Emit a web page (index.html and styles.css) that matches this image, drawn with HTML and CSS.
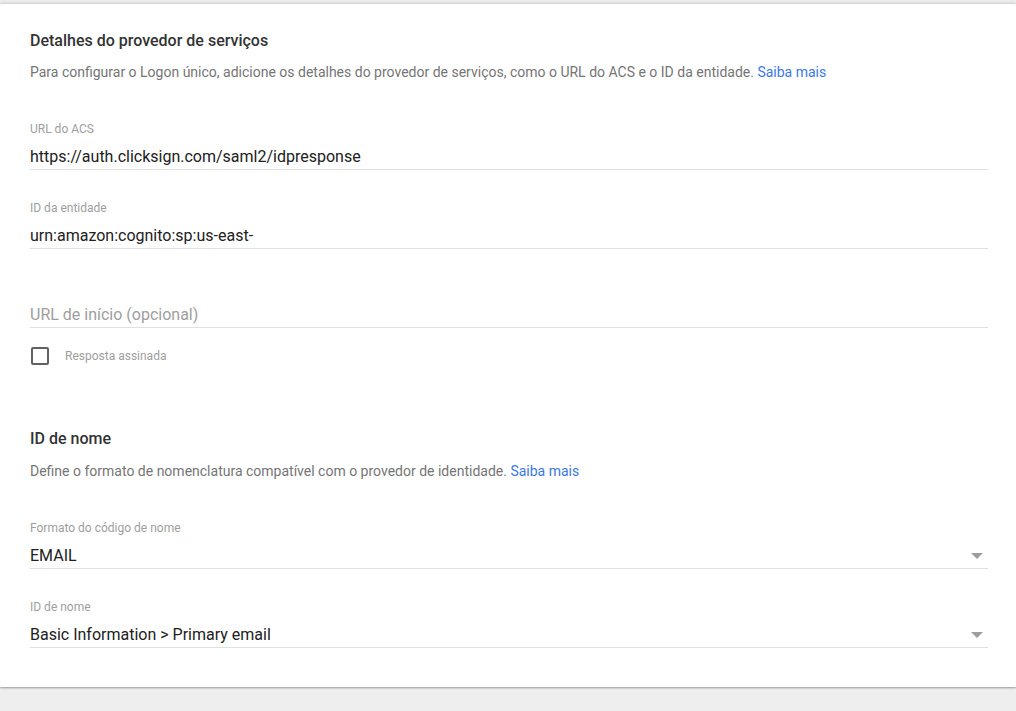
FILE: index.html
```html
<!DOCTYPE html>
<html lang="pt">
<head>
<meta charset="utf-8">
<link rel="stylesheet" href="styles.css">
</head>
<body>
<div class="page">
  <div class="card">
    <h2 class="title">Detalhes do provedor de serviços</h2>
    <p class="desc first">Para configurar o Logon único, adicione os detalhes do provedor de serviços, como o URL do ACS e o ID da entidade. <a class="link" href="#">Saiba mais</a></p>

    <div class="field">
      <div class="label">URL do ACS</div>
      <div class="input">https://auth.clicksign.com/saml2/idpresponse</div>
    </div>
    <div class="field">
      <div class="label">ID da entidade</div>
      <div class="input">urn:amazon:cognito:sp:us-east-</div>
    </div>
    <div class="field">
      <div class="label"></div>
      <div class="input placeholder">URL de início (opcional)</div>
    </div>

    <label class="check">
      <span class="box"></span>
      <span class="check-label">Resposta assinada</span>
    </label>

    <h2 class="title section2">ID de nome</h2>
    <p class="desc">Define o formato de nomenclatura compatível com o provedor de identidade. <a class="link" href="#">Saiba mais</a></p>

    <div class="field">
      <div class="label">Formato do código de nome</div>
      <div class="input select"><span>EMAIL</span><span class="arrow"></span></div>
    </div>
    <div class="field">
      <div class="label">ID de nome</div>
      <div class="input select"><span>Basic Information &gt; Primary email</span><span class="arrow"></span></div>
    </div>
  </div>
</div>
</body>
</html>
```

FILE: styles.css
```css
html, body {
  margin: 0;
  padding: 0;
}
body {
  background: #eeeeee;
  font-family: Roboto, "Noto Sans", Arial, sans-serif;
  height: 711px;
  overflow: hidden;
}
.page {
  padding-top: 4px;
}
.card {
  background: #ffffff;
  height: 683px;
  box-sizing: border-box;
  padding: 27px 28px 0 30px;
  box-shadow: 0 1px 2px rgba(0,0,0,0.35), 0 -1px 3px rgba(0,0,0,0.12);
}
.title {
  margin: 0;
  font-size: 16px;
  line-height: 20px;
  font-weight: 500;
  color: #333333;
}
.section2 {
  margin-top: 64px;
}
.desc {
  margin: 12px 0 0;
  font-size: 14px;
  line-height: 20px;
  color: #757575;
}
.desc.first {
  margin-top: 11px;
}
.link {
  color: #3b78e7;
  text-decoration: none;
}
.desc + .field {
  margin-top: 39px;
}
.field {
  margin-top: 30px;
}
.label {
  font-size: 12px;
  line-height: 16px;
  height: 16px;
  color: #9e9e9e;
  margin-bottom: 8px;
}
.input {
  font-size: 16px;
  line-height: 24px;
  height: 24px;
  color: #212121;
  border-bottom: 1px solid #e0e0e0;
}
.placeholder {
  color: #9e9e9e;
}
.select {
  display: flex;
  align-items: center;
  justify-content: space-between;
}
.arrow {
  width: 0;
  height: 0;
  border-left: 6px solid transparent;
  border-right: 6px solid transparent;
  border-top: 6px solid #9e9e9e;
  margin-right: 5px;
}
.check {
  display: flex;
  align-items: center;
  margin-top: 19px;
  padding-left: 1px;
}
.box {
  width: 18px;
  height: 18px;
  box-sizing: border-box;
  border: 2px solid #616161;
  border-radius: 2px;
}
.check-label {
  margin-left: 16px;
  font-size: 12px;
  line-height: 16px;
  color: #9e9e9e;
}
```
